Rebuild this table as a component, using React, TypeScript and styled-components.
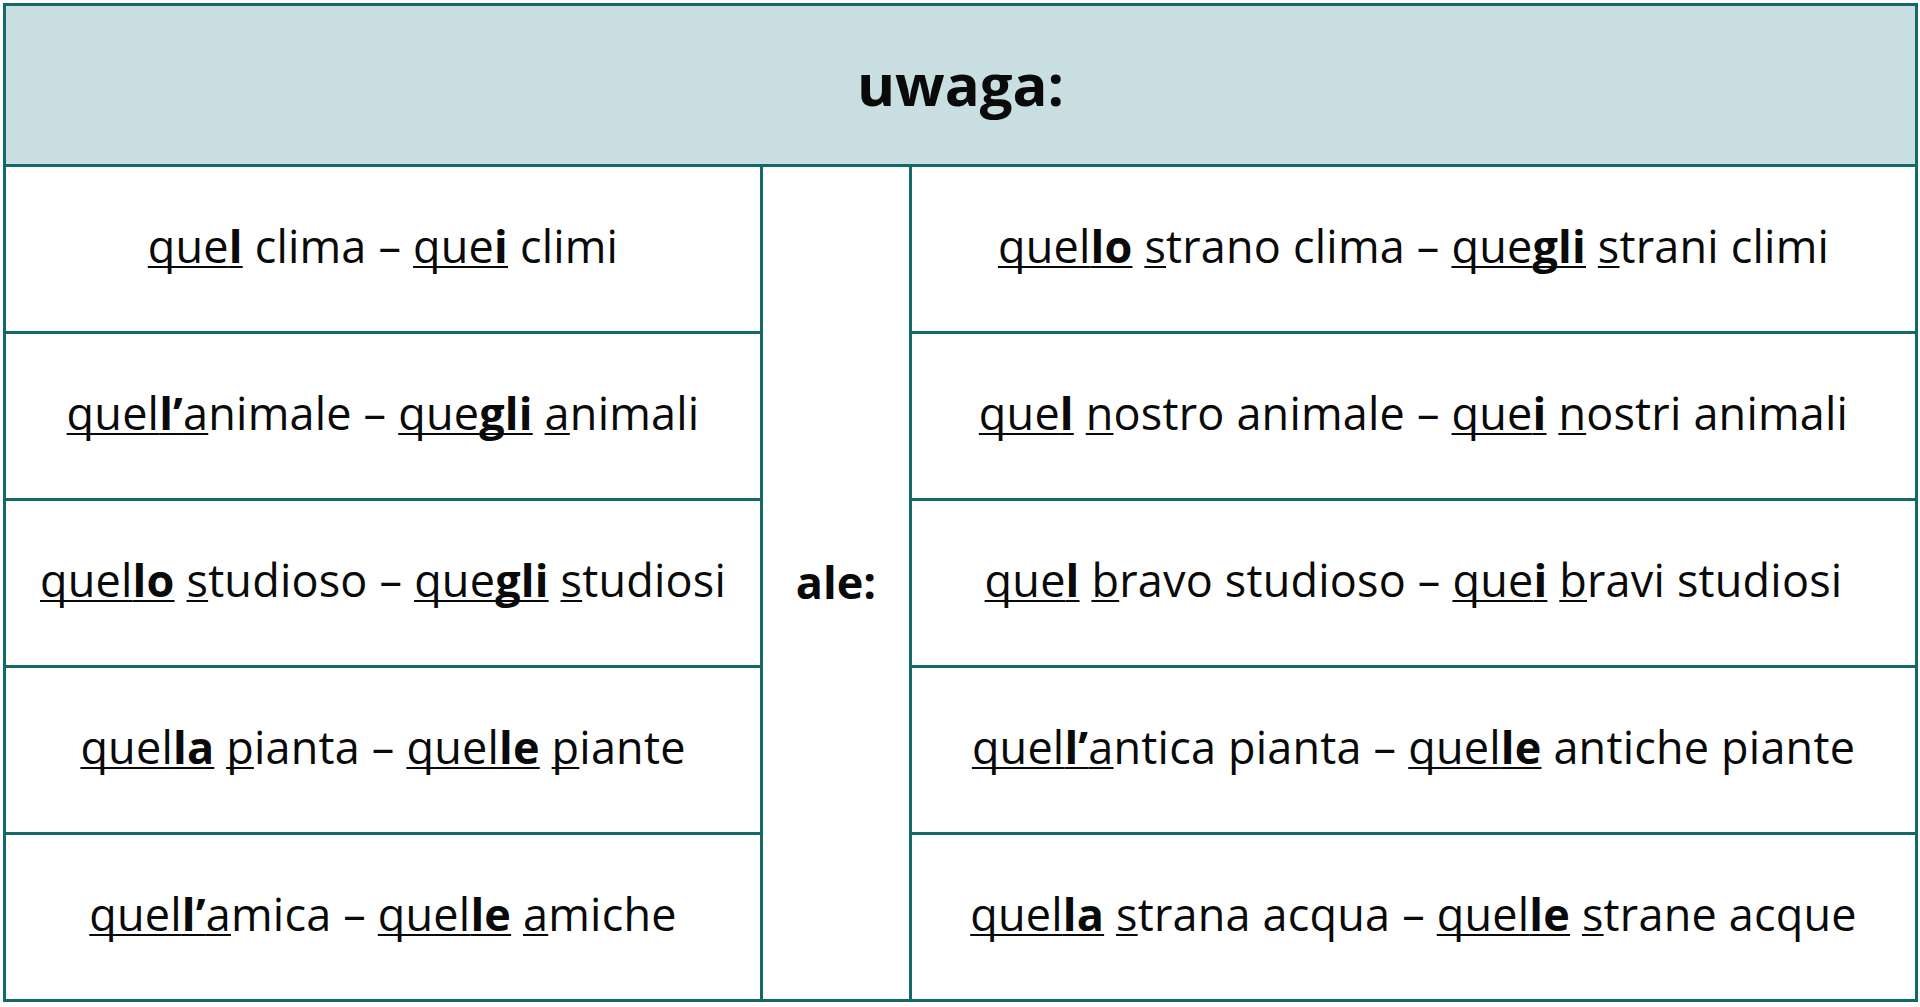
import React from "react"
import styled, { createGlobalStyle } from "styled-components"

const GlobalStyle = createGlobalStyle`
    html, body {
        margin: 0;
        padding: 0;
        background: #ffffff;
    }
    body {
        font-family: "Open Sans", "Noto Sans", "Liberation Sans", sans-serif;
        color: #0a0a0a;
    }
`

const teal = "#146868"

// U = underlined part, B = bold part
const U = styled.span`
    text-decoration: underline;
    text-decoration-thickness: 2px;
    text-underline-offset: 3px;
    text-decoration-skip-ink: none;
`

const B = styled.b`
    font-weight: 700;
`

const left = [
    <><U>que<B>l</B></U> clima – <U>que<B>i</B></U> climi</>,
    <><U>quel<B>l’</B>a</U>nimale – <U>que<B>gli</B></U> <U>a</U>nimali</>,
    <><U>quel<B>lo</B></U> <U>s</U>tudioso – <U>que<B>gli</B></U> <U>s</U>tudiosi</>,
    <><U>quel<B>la</B></U> <U>p</U>ianta – <U>quel<B>le</B></U> <U>p</U>iante</>,
    <><U>quel<B>l’</B>a</U>mica – <U>quel<B>le</B></U> <U>a</U>miche</>,
]

const right = [
    <><U>quel<B>lo</B></U> <U>s</U>trano clima – <U>que<B>gli</B></U> <U>s</U>trani climi</>,
    <><U>que<B>l</B></U> <U>n</U>ostro animale – <U>que<B>i</B></U> <U>n</U>ostri animali</>,
    <><U>que<B>l</B></U> <U>b</U>ravo studioso – <U>que<B>i</B></U> <U>b</U>ravi studiosi</>,
    <><U>quel<B>l’</B>a</U>ntica pianta – <U>quel<B>le</B></U> antiche piante</>,
    <><U>quel<B>la</B></U> <U>s</U>trana acqua – <U>quel<B>le</B></U> <U>s</U>trane acque</>,
]

export default function App() {
    return (
        <>
            <GlobalStyle />
            <Page>
                <Table>
                    <HeaderCell>uwaga:</HeaderCell>
                    {left.map((item, i) => (
                        <Cell key={`l${i}`} $col={1} $row={i + 2}>
                            <Phrase>{item}</Phrase>
                        </Cell>
                    ))}
                    <MiddleCell>ale:</MiddleCell>
                    {right.map((item, i) => (
                        <Cell key={`r${i}`} $col={3} $row={i + 2}>
                            <Phrase>{item}</Phrase>
                        </Cell>
                    ))}
                </Table>
            </Page>
        </>
    )
}

const Page = styled.div`
    padding: 3px 2px 5px 3px;
    box-sizing: border-box;
    width: 1920px;
    height: 1007px;
`

const Table = styled.div`
    display: grid;
    grid-template-columns: 754px 146px 1fr;
    grid-template-rows: 158px repeat(5, 1fr);
    gap: 3px;
    height: 100%;
    box-sizing: border-box;
    border: 3px solid ${teal};
    background: ${teal};
`

const HeaderCell = styled.div`
    grid-column: 1 / span 3;
    grid-row: 1;
    background: #c8dee1;
    display: flex;
    align-items: center;
    justify-content: center;
    font-size: 58px;
    font-weight: 700;
    padding-bottom: 4px;
`

const Cell = styled.div<{ $col: number; $row: number }>`
    grid-column: ${p => p.$col};
    grid-row: ${p => p.$row};
    background: #ffffff;
    display: flex;
    align-items: center;
    justify-content: center;
    font-size: 45px;
    letter-spacing: 0.2px;
    padding-bottom: 8px;
`

const Phrase = styled.span`
    white-space: pre;
`

const MiddleCell = styled.div`
    grid-column: 2;
    grid-row: 2 / span 5;
    background: #ffffff;
    display: flex;
    align-items: center;
    justify-content: center;
    font-size: 45px;
    font-weight: 700;
    padding-bottom: 4px;
`
